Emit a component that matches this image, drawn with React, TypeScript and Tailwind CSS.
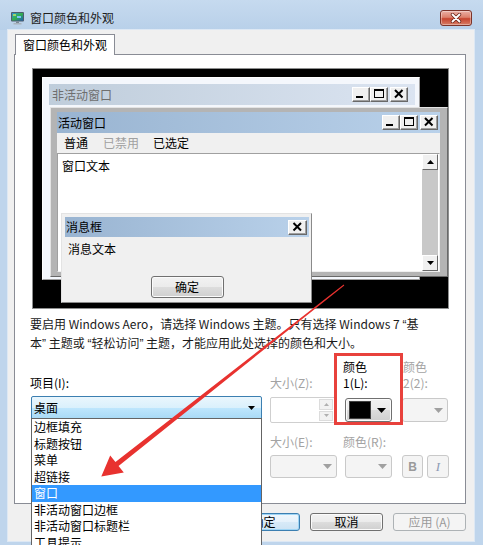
import React from "react";

function Tri({ w, h, color, up = false }: { w: number; h: number; color: string; up?: boolean }) {
  return (
    <svg width={w} height={h} viewBox={`0 0 ${w} ${h}`} className="block">
      <polygon points={up ? `0,${h} ${w},${h} ${w / 2},0` : `0,0 ${w},0 ${w / 2},${h}`} fill={color} />
    </svg>
  );
}

function CapBtn({ kind }: { kind: "min" | "max" | "close" }) {
  return (
    <div className="w-[18px] h-[15px] bg-[#f0f0f0] border border-t-white border-l-white border-r-[#696969] border-b-[#696969] shadow-[inset_-1px_-1px_0_#a0a0a0] flex items-center justify-center">
      <svg width="16" height="13" viewBox="0 0 16 13" className="block">
        {kind === "min" && <rect x="3" y="8" width="7" height="2" fill="#000" />}
        {kind === "max" && <path d="M3 1h10v9H3z M4 3h8v6H4z" fill="#000" fillRule="evenodd" />}
        {kind === "close" && <path d="M4 2 L11.5 9.5 M11.5 2 L4 9.5" stroke="#000" strokeWidth="2" />}
      </svg>
    </div>
  );
}

function CapButtons() {
  return (
    <div className="flex">
      <CapBtn kind="min" />
      <CapBtn kind="max" />
      <div className="ml-[2px]">
        <CapBtn kind="close" />
      </div>
    </div>
  );
}

function AppIcon() {
  return (
    <svg width="16" height="16" viewBox="0 0 16 16" className="block">
      <defs>
        <linearGradient id="scr" x1="0" y1="0" x2="1" y2="1">
          <stop offset="0" stopColor="#2a8fe0" />
          <stop offset="0.5" stopColor="#33b04a" />
          <stop offset="1" stopColor="#1c5fb8" />
        </linearGradient>
      </defs>
      <rect x="1" y="2" width="13" height="9.5" rx="1" fill="#4e5d6c" />
      <rect x="2" y="3" width="11" height="7.5" fill="url(#scr)" />
      <rect x="3" y="4" width="3" height="2" fill="#9fd66a" />
      <rect x="7" y="6" width="4" height="2" fill="#79c2f5" />
      <rect x="6" y="11.5" width="3" height="1.5" fill="#7b8794" />
      <rect x="3.5" y="13" width="8" height="1.5" fill="#a9b3bd" />
    </svg>
  );
}

const winBtn =
  "border border-[#707070] rounded-[3px] bg-[linear-gradient(#f2f2f2,#ebebeb_50%,#dddddd_50%,#cfcfcf)] shadow-[inset_0_0_0_1px_#fbfbfb]";
const disBox = "border border-[#c9c9c9] rounded-[3px] bg-[#f4f4f4]";

function Q({ children }: { children: React.ReactNode }) {
  return <span className="font-['Liberation_Sans',sans-serif]">{children}</span>;
}

export default function App() {
  const items = ["边框填充", "标题按钮", "菜单", "超链接", "窗口", "非活动窗口边框", "非活动窗口标题栏", "工具提示"];
  return (
    <div className="relative w-[483px] h-[545px] overflow-hidden bg-[#bfd5ec] font-['Noto_Sans_CJK_SC',sans-serif] text-[12px] text-black">
      {/* Title bar */}
      <div className="h-[30px] pt-[6px] flex items-center bg-[linear-gradient(#c6daef,#b8d0e9)]">
        <div className="ml-[10px]">
          <AppIcon />
        </div>
        <span className="ml-[4px] leading-none text-[#1e1e1e]">窗口颜色和外观</span>
        <div className="ml-auto mr-[11px] w-[32px] h-[16px] rounded-[3px] border border-[#7b3329] bg-[linear-gradient(#eab0a5,#dc806c_45%,#c6452f_55%,#d77d65)] shadow-[inset_0_0_0_1px_rgba(255,255,255,0.35)] flex items-center justify-center">
          <svg width="12" height="10" viewBox="0 0 12 10" className="block">
            <path d="M2.5 1.5 L9.5 8.5 M9.5 1.5 L2.5 8.5" stroke="#6a2418" strokeWidth="3.4" strokeLinecap="round" />
            <path d="M2.5 1.5 L9.5 8.5 M9.5 1.5 L2.5 8.5" stroke="#ffffff" strokeWidth="1.9" strokeLinecap="round" />
          </svg>
        </div>
      </div>

      {/* Client area */}
      <div className="ml-[8px] w-[466px] h-[511px] bg-[#f0f0f0] pt-[4px] shadow-[0_0_0_1px_#dde8f4]">
        {/* Tab */}
        <div className="relative z-10 ml-[7px] w-[100px] h-[21px] border border-b-0 border-[#898c95] bg-white flex items-center pl-[7px] pb-[1px] leading-none">
          窗口颜色和外观
        </div>
        {/* Panel */}
        <div className="-mt-px ml-[6px] w-[452px] h-[450px] border border-[#898c95] bg-white flex flex-col">
          {/* Preview */}
          <div className="mt-[13px] ml-[17px] w-[417px] h-[241px] border border-[#8e8f8f] bg-black relative overflow-hidden">
            {/* Inactive window */}
            <div className="absolute left-[9px] top-[8px] w-[378px] h-[203px] border border-t-white border-l-white border-r-[#a0a0a0] border-b-[#a0a0a0] bg-[#f4f7fc] pt-[6px] pl-[6px] pr-[4px]">
              <div className="h-[21px] flex items-center bg-[linear-gradient(90deg,#bfcddb,#dbe4f1)] pl-[3px]">
                <span className="text-[#6e6e6e] leading-none">非活动窗口</span>
                <div className="ml-auto mr-[7px]">
                  <CapButtons />
                </div>
              </div>
            </div>
            {/* Active window */}
            <div className="absolute left-[17px] top-[38px] w-[398px] h-[170px] border border-t-[#e3e3e3] border-l-[#e3e3e3] border-r-[#696969] border-b-[#696969] bg-[#b4b4b4] pt-[4px] pl-[6px] pr-[7px] pb-[4px] flex flex-col">
              <div className="h-[21px] shrink-0 flex items-center bg-[linear-gradient(90deg,#99b4d1,#b9d1ea)] pl-[1px]">
                <span className="leading-none">活动窗口</span>
                <div className="ml-auto mr-[2px]">
                  <CapButtons />
                </div>
              </div>
              <div className="h-[20px] shrink-0 bg-[#f0f0f0] flex items-center pl-[7px] leading-none">
                <span>普通</span>
                <span className="ml-[15px] text-[#a0a0a0]">已禁用</span>
                <span className="ml-[14px]">已选定</span>
              </div>
              <div className="flex-1 flex bg-white border border-t-[#a0a0a0] border-l-[#a0a0a0] border-r-[#f0f0f0] border-b-[#f0f0f0]">
                <div className="flex-1 pl-[4px] pt-[4px] leading-[16px]">窗口文本</div>
                <div className="w-[16px] flex flex-col bg-[#c8c8c8] mr-[1px]">
                  <div className="h-[16px] bg-[#f0f0f0] border border-t-white border-l-white border-r-[#696969] border-b-[#696969] flex items-center justify-center">
                    <Tri w={7} h={4} color="#000" up />
                  </div>
                  <div className="flex-1" />
                  <div className="h-[16px] bg-[#f0f0f0] border border-t-white border-l-white border-r-[#696969] border-b-[#696969] flex items-center justify-center">
                    <Tri w={7} h={4} color="#000" />
                  </div>
                </div>
              </div>
            </div>
            {/* Message box */}
            <div className="absolute left-[28px] top-[144px] w-[251px] h-[90px] border border-t-[#e3e3e3] border-l-[#e3e3e3] border-r-[#8a8a8a] border-b-[#8a8a8a] bg-[#f0f0f0] pt-[3px] pl-[3px] pr-[2px] flex flex-col">
              <div className="h-[20px] flex items-center bg-[linear-gradient(90deg,#99b4d1,#b9d1ea)] pl-[1px]">
                <span className="leading-none">消息框</span>
                <div className="ml-auto mr-[2px] w-[19px] h-[15px] bg-[#f0f0f0] border border-t-white border-l-white border-r-[#696969] border-b-[#696969] shadow-[inset_-1px_-1px_0_#a0a0a0] flex items-center justify-center">
                  <svg width="17" height="13" viewBox="0 0 17 13" className="block">
                    <path d="M4.5 2 L12 9.5 M12 2 L4.5 9.5" stroke="#000" strokeWidth="2" />
                  </svg>
                </div>
              </div>
              <div className="mt-[4px] pl-[3px] leading-[16px]">消息文本</div>
              <div className={`mt-[19px] mx-auto w-[73px] h-[22px] ${winBtn} flex items-center justify-center leading-none`}>确定</div>
            </div>
          </div>

          {/* Info text */}
          <div className="mt-[6px] ml-[15px] leading-[18px] whitespace-nowrap text-[#1a1a1a]">
            <div>
              要启用 Windows Aero，请选择 Windows 主题。只有选择 Windows 7 <Q>“</Q>基
            </div>
            <div>
              本<Q>”</Q> 主题或 <Q>“</Q>轻松访问<Q>”</Q> 主题，才能应用此处选择的颜色和大小。
            </div>
          </div>

          {/* Row A */}
          <div className="mt-[5px] ml-[15px] flex items-start">
            <div className="w-[232px] flex flex-col">
              <div className="mt-[17px] leading-[16px]">项目(I):</div>
              <div className="mt-[5px] ml-[1px] w-[231px] h-[24px] border border-[#3c7fb1] rounded-[2px] bg-[linear-gradient(#eaf6fd,#d9f0fc_50%,#bee6fd_50%,#a7d9f5)] flex items-center pl-[2px] pr-[6px]">
                <span className="leading-none">桌面</span>
                <div className="ml-auto">
                  <Tri w={7} h={4} color="#000" />
                </div>
              </div>
            </div>
            <div className="ml-[8px] w-[67px] flex flex-col">
              <div className="mt-[17px] leading-[16px] text-[#a3a3a3]">大小(Z):</div>
              <div className="mt-[6px] w-[66px] h-[26px] border border-[#cfcfcf] rounded-[2px] bg-white flex justify-end items-center pr-[2px]">
                <div className="w-[14px] h-[22px] flex flex-col gap-[1px]">
                  <div className="flex-1 bg-[#f2f2f2] border border-[#dcdcdc] flex items-center justify-center">
                    <Tri w={5} h={3} color="#b0b0b0" up />
                  </div>
                  <div className="flex-1 bg-[#f2f2f2] border border-[#dcdcdc] flex items-center justify-center">
                    <Tri w={5} h={3} color="#b0b0b0" />
                  </div>
                </div>
              </div>
            </div>
            <div className="ml-[6px] w-[49px] flex flex-col">
              <div className="mt-[1px] leading-[16px]">
                <div>颜色</div>
                <div>1(L):</div>
              </div>
              <div className={`mt-[7px] ml-[2px] w-[47px] h-[24px] ${winBtn} flex items-center pl-[3px] pr-[5px]`}>
                <div className="w-[22px] h-[18px] bg-black border border-[#404040]" />
                <div className="ml-auto">
                  <Tri w={9} h={5} color="#000" />
                </div>
              </div>
            </div>
            <div className="ml-[10px] w-[46px] flex flex-col">
              <div className="mt-[1px] pl-[1px] leading-[16px] text-[#a3a3a3]">
                <div>颜色</div>
                <div>2(2):</div>
              </div>
              <div className={`mt-[7px] w-[46px] h-[24px] ${disBox} flex items-center justify-end pr-[4px]`}>
                <Tri w={9} h={5} color="#a0a0a0" />
              </div>
            </div>
          </div>

          {/* Row B */}
          <div className="mt-[11px] ml-[15px] flex items-start">
            <div className="w-[232px]" />
            <div className="ml-[8px] w-[67px] flex flex-col">
              <div className="leading-[16px] text-[#a3a3a3]">大小(E):</div>
              <div className={`mt-[5px] w-[67px] h-[23px] ${disBox} flex items-center justify-end pr-[4px]`}>
                <Tri w={9} h={5} color="#a0a0a0" />
              </div>
            </div>
            <div className="ml-[6px] w-[49px] flex flex-col">
              <div className="leading-[16px] text-[#a3a3a3] whitespace-nowrap">颜色(R):</div>
              <div className={`mt-[5px] ml-[2px] w-[47px] h-[23px] ${disBox} flex items-center justify-end pr-[4px]`}>
                <Tri w={9} h={5} color="#a0a0a0" />
              </div>
            </div>
            <div className="ml-[10px] mt-[21px] flex">
              <div className={`w-[21px] h-[23px] ${disBox} flex items-center justify-center font-bold text-[#9a9a9a] font-['Liberation_Sans',sans-serif] text-[12px] leading-none`}>
                B
              </div>
              <div className={`ml-[4px] w-[22px] h-[23px] ${disBox} flex items-center justify-center italic text-[#8d9bb5] font-['Liberation_Serif',serif] text-[13px] leading-none`}>
                I
              </div>
            </div>
          </div>
        </div>

        {/* Bottom buttons */}
        <div className="mt-[9px] mr-[8px] flex justify-end gap-[10px]">
          <div className="w-[73px] h-[18px] border border-[#3c7fb1] rounded-[3px] bg-[linear-gradient(#f0f7fc,#e5f1fb_50%,#d8eaf8_50%,#cde3f4)] shadow-[inset_0_0_0_1px_#9fd5f5] flex items-center justify-center leading-none">
            确定
          </div>
          <div className={`w-[73px] h-[18px] ${winBtn} flex items-center justify-center leading-none`}>取消</div>
          <div className="w-[73px] h-[18px] border border-[#adb2b5] rounded-[3px] bg-[#f4f4f4] flex items-center justify-center leading-none text-[#9a9a9a]">
            应用 (A)
          </div>
        </div>
      </div>

      {/* Open dropdown list */}
      <div className="absolute left-[31px] top-[418px] w-[231px] h-[140px] border border-[#646464] bg-white">
        {items.map((t) => (
          <div
            key={t}
            className={`h-[16.5px] flex items-center pl-[2px] leading-none ${t === "窗口" ? "bg-[#3399ff] text-white" : ""}`}
          >
            {t}
          </div>
        ))}
      </div>

      {/* Red highlight box */}
      <div className="absolute left-[334px] top-[353px] w-[69px] h-[72px] border-[3px] border-[#e8413c] pointer-events-none" />

      {/* Red arrow */}
      <svg className="absolute left-0 top-0 pointer-events-none" width="483" height="545" viewBox="0 0 483 545">
        <polygon
          points="343.7,284.6 344.3,285.4 118.55,465.96 123.8,472.6 101.3,476.4 110.2,455.4 115.45,462.04"
          fill="#e8322f"
        />
      </svg>
    </div>
  );
}
